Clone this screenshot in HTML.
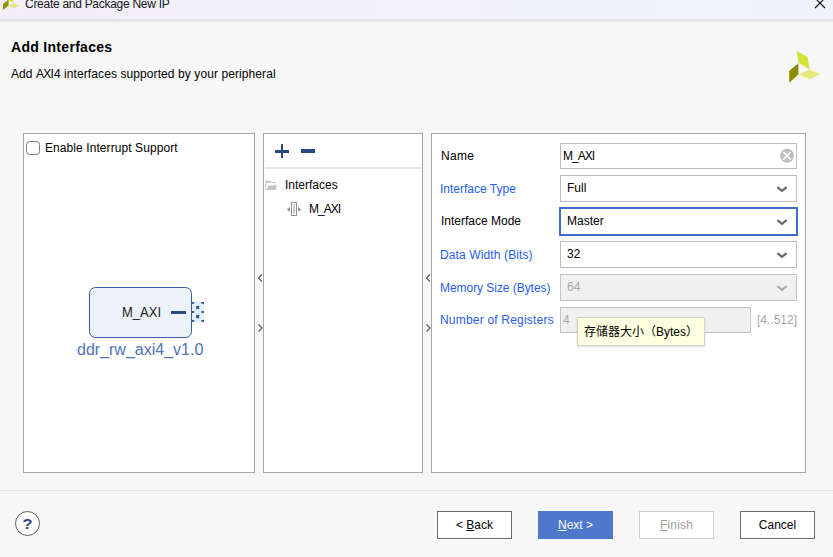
<!DOCTYPE html>
<html lang="en">
<head>
<meta charset="utf-8">
<title>Create and Package New IP</title>
<style>
html,body{margin:0;padding:0;}
body{width:833px;height:557px;overflow:hidden;position:relative;background:#f7f7f7;
  font-family:"Liberation Sans","Noto Sans CJK SC",sans-serif;font-size:12px;color:#000;}
.abs{position:absolute;}
.t{position:absolute;white-space:nowrap;line-height:14px;height:14px;}
#titlebar{left:0;top:0;width:833px;height:19px;background:linear-gradient(90deg,#f3eef8 0%,#f2f2f8 50%,#eff3f9 100%);}
#titleline{left:0;top:19px;width:833px;height:3px;background:#e4e4e4;}
.panel{position:absolute;background:#fff;border:1px solid #a6a6a6;box-sizing:border-box;}
.lbl{color:#000;}
.blue{color:#1f5eee;}
.field{position:absolute;box-sizing:border-box;background:#fff;border:1px solid #bdbdbd;}
.field.dis{background:#f0f0f0;border-color:#c4c4c4;}
.btn{position:absolute;box-sizing:border-box;top:511px;height:28px;width:75px;background:#fff;border:1px solid #6a6a6a;text-align:center;line-height:26px;font-size:12px;}
u{text-decoration:underline;text-underline-offset:1px;}
</style>
</head>
<body>

<!-- title bar -->
<div id="titlebar" class="abs"></div>
<div id="titleline" class="abs"></div>
<svg class="abs" style="left:0;top:0" width="24" height="14" viewBox="0 0 24 14">
  <polygon points="8,-4 13,-1.5 13.5,3 9,0.5" fill="#d4e034"/>
  <polygon points="3,4 8.6,-0.5 8.6,5.5 3,10" fill="#8f9400"/>
  <polygon points="9,5.6 14,3.2 19,5.6 14,8.6" fill="#e3ea7a"/>
</svg>
<div class="t" id="ttl" style="left:25px;top:-3px;font-size:12px;letter-spacing:-0.28px;color:#151515;">Create and Package New IP</div>
<svg class="abs" style="left:812px;top:0" width="16" height="10" viewBox="0 0 16 10">
  <path d="M3,-2 L13,8 M13,-2 L3,8" stroke="#111" stroke-width="1.1" fill="none"/>
</svg>

<!-- header -->
<div class="t" id="h1" style="left:11px;top:40px;font-size:14px;font-weight:bold;letter-spacing:0.3px;">Add Interfaces</div>
<div class="t" id="h2" style="left:11px;top:67px;letter-spacing:0.09px;">Add <span style="letter-spacing:-0.8px">AX</span>I4 interfaces supported by your peripheral</div>
<svg class="abs" style="left:785px;top:48px" width="40" height="38" viewBox="785 48 40 38">
  <polygon points="796.8,51.2 807.6,57.1 809.4,69.2 798.6,62.9" fill="#d4e034"/>
  <polygon points="789.2,71 798.4,63.2 798.4,74.6 789.2,82.7" fill="#8a8f00"/>
  <polygon points="799.1,74.6 809.4,69.6 820.6,74.1 809.8,79.5" fill="#e3ea7a"/>
</svg>

<!-- left panel -->
<div class="panel" style="left:23px;top:133px;width:232px;height:340px;"></div>
<div class="abs" style="left:26px;top:141px;width:14px;height:14px;box-sizing:border-box;border:1px solid #7d7d7d;border-radius:3.5px;background:#fff;"></div>
<div class="t" id="cb" style="left:45px;top:141px;letter-spacing:0.08px;">Enable Interrupt Support</div>

<!-- block diagram -->
<div class="abs" style="left:89px;top:287px;width:103px;height:51px;box-sizing:border-box;border:1px solid #3a5aa5;border-radius:6.5px;background:#eef2fa;"></div>
<div class="t" id="bm" style="left:121.5px;top:303px;font-size:15.5px;transform:scaleX(0.84);transform-origin:0 0;line-height:18px;height:18px;color:#262626;">M_AXI</div>
<div class="abs" style="left:171px;top:311px;width:15px;height:3px;background:#2b4a8c;"></div>
<svg class="abs" style="left:192px;top:301px" width="14" height="22" viewBox="0 0 14 22">
  <rect x="0" y="1" width="12" height="20" fill="#e3eefa"/>
  <g fill="#2b579a">
    <rect x="0" y="1" width="2.2" height="1.8"/><rect x="9.3" y="1" width="2.7" height="1.8"/>
    <rect x="0" y="10.1" width="2.2" height="1.8"/><rect x="9.3" y="10.1" width="2.7" height="1.8"/>
    <rect x="0" y="19" width="2.2" height="1.8"/><rect x="9.3" y="19" width="2.7" height="1.8"/>
    <rect x="4.2" y="4.9" width="3" height="3.2"/><rect x="4.2" y="14" width="3" height="3.2"/>
  </g>
</svg>
<div class="t" id="ddr" style="left:77px;top:341px;font-size:16px;line-height:18px;height:18px;color:#5373b6;">ddr_rw_axi4_v1.0</div>

<!-- splitter 1 -->
<svg class="abs" style="left:256px;top:270px" width="8" height="66" viewBox="0 0 8 66">
  <path d="M6,4.5 L2.5,8 L6,11.5" stroke="#5a5a5a" stroke-width="1.2" fill="none"/>
  <path d="M2.5,54.5 L6,58 L2.5,61.5" stroke="#5a5a5a" stroke-width="1.2" fill="none"/>
</svg>

<!-- middle panel -->
<div class="panel" style="left:263px;top:133px;width:160px;height:340px;"></div>
<div class="abs" style="left:275px;top:149.5px;width:14px;height:3px;background:#2a4880;"></div>
<div class="abs" style="left:280.5px;top:144px;width:2.8px;height:14px;background:#2a4880;"></div>
<div class="abs" style="left:301px;top:149px;width:14px;height:4px;background:#2a4880;"></div>
<div class="abs" style="left:265px;top:167px;width:157px;height:2px;background:#e6e6e6;"></div>
<svg class="abs" style="left:264px;top:178.5px" width="14" height="13" viewBox="0 0 14 13">
  <path d="M1.3,2.4 Q1.3,1.6 2.1,1.6 L5.8,1.6 Q6.5,1.6 6.6,2.4 L6.7,3.1 L10.6,3.1 Q11.4,3.1 11.4,3.9 L11.4,6.4 L10.4,6.4 L10.4,4.1 L2.3,4.1 L2.3,10.9 L1.3,10.9 Z" fill="#cdcdcd"/>
  <polygon points="4.1,6.6 13,6.6 11.9,11.1 2.7,11.1" fill="#c3c3c3"/>
</svg>
<div class="t" id="ifs" style="left:285px;top:178px;">Interfaces</div>
<svg class="abs" style="left:286px;top:201px" width="16" height="17" viewBox="0 0 16 17">
  <rect x="5.5" y="1.5" width="5" height="13" fill="#fff" stroke="#8f9195" stroke-width="1"/>
  <rect x="7.1" y="3.1" width="1.9" height="9.8" fill="#cdced0"/>
  <polygon points="0.8,8.45 3.9,5.8 3.9,11.1" fill="#95989b"/>
  <polygon points="12,5.8 12,11.1 15.1,8.45" fill="#95989b"/>
</svg>
<div class="t" id="max" style="left:309px;top:201.5px;letter-spacing:-1px;">M_AXI</div>

<!-- splitter 2 -->
<svg class="abs" style="left:424px;top:270px" width="8" height="66" viewBox="0 0 8 66">
  <path d="M6,4.5 L2.5,8 L6,11.5" stroke="#5a5a5a" stroke-width="1.2" fill="none"/>
  <path d="M2.5,54.5 L6,58 L2.5,61.5" stroke="#5a5a5a" stroke-width="1.2" fill="none"/>
</svg>

<!-- right panel -->
<div class="panel" style="left:431px;top:133px;width:375px;height:340px;"></div>

<div class="t lbl" id="l1" style="left:441px;top:149px;letter-spacing:0.3px;">Name</div>
<div class="field" style="left:560px;top:143px;width:237px;height:26px;"></div>
<div class="t" id="v1" style="left:563px;top:149px;letter-spacing:-1px;">M_AXI</div>
<svg class="abs" style="left:779px;top:148px" width="16" height="16" viewBox="0 0 16 16">
  <circle cx="8" cy="7.8" r="7" fill="#bebebe"/>
  <path d="M4.2,4 L11.8,11.6 M11.8,4 L4.2,11.6" stroke="#fff" stroke-width="1.6" fill="none"/>
</svg>

<div class="t blue" id="l2" style="left:440px;top:182px;">Interface Type</div>
<div class="field" style="left:560px;top:175px;width:237px;height:27px;"></div>
<div class="t" id="v2" style="left:567px;top:181px;">Full</div>
<svg class="abs" style="left:775px;top:183px" width="14" height="12" viewBox="0 0 14 12"><path d="M2.4,4.2 L7,7.8 L11.6,4.2" stroke="#646464" stroke-width="2.1" fill="none"/></svg>

<div class="t lbl" id="l3" style="left:441px;top:214px;">Interface Mode</div>
<div class="field" style="left:559px;top:207px;width:239px;height:29px;border:2px solid #3d6cc9;"></div>
<div class="t" id="v3" style="left:567px;top:214px;">Master</div>
<svg class="abs" style="left:775px;top:216px" width="14" height="12" viewBox="0 0 14 12"><path d="M2.4,4.2 L7,7.8 L11.6,4.2" stroke="#646464" stroke-width="2.1" fill="none"/></svg>

<div class="t blue" id="l4" style="left:440px;top:248px;letter-spacing:0.12px;">Data Width (Bits)</div>
<div class="field" style="left:560px;top:241px;width:237px;height:27px;"></div>
<div class="t" id="v4" style="left:567px;top:247px;">32</div>
<svg class="abs" style="left:775px;top:249px" width="14" height="12" viewBox="0 0 14 12"><path d="M2.4,4.2 L7,7.8 L11.6,4.2" stroke="#646464" stroke-width="2.1" fill="none"/></svg>

<div class="t blue" id="l5" style="left:440px;top:281px;letter-spacing:-0.05px;">Memory Size (Bytes)</div>
<div class="field dis" style="left:560px;top:274px;width:237px;height:27px;"></div>
<div class="t" id="v5" style="left:567px;top:280px;color:#a6a6a6;">64</div>
<svg class="abs" style="left:775px;top:282px" width="14" height="12" viewBox="0 0 14 12"><path d="M2.4,4.2 L7,7.8 L11.6,4.2" stroke="#aaaaaa" stroke-width="2.1" fill="none"/></svg>

<div class="t blue" id="l6" style="left:440px;top:313px;letter-spacing:0.2px;">Number of Registers</div>
<div class="field dis" style="left:560px;top:307px;width:191px;height:26px;"></div>
<div class="t" id="v6" style="left:563px;top:313px;color:#a6a6a6;">4</div>
<div class="t" id="rng" style="left:757px;top:312.5px;color:#a6a6a6;">[4..512]</div>

<!-- tooltip -->
<div class="abs" style="left:577px;top:317px;width:128px;height:29px;box-sizing:border-box;background:#ffffe1;border:1px solid #d4d4c8;box-shadow:0 1px 2px rgba(0,0,0,0.15);"></div>
<div class="t" id="tip" style="left:584px;top:323px;font-size:12px;line-height:18px;height:18px;">存储器大小（Bytes）</div>

<!-- footer -->
<div class="abs" style="left:0;top:490px;width:833px;height:1px;background:#e5e5e5;"></div>
<div class="abs" style="left:15px;top:511px;width:25px;height:25px;box-sizing:border-box;border:1px solid #5e5e5e;border-radius:50%;background:#fff;"></div>
<div class="t" id="q" style="left:15.3px;top:516px;width:25px;text-align:center;font-weight:bold;font-size:14px;line-height:16px;height:16px;color:#2a4585;transform:scaleX(1.17);">?</div>

<div class="btn" style="left:437px;">&lt; <u>B</u>ack</div>
<div class="btn" style="left:538px;background:#4d78cc;border-color:#4d78cc;color:#fff;"><u>N</u>ext &gt;</div>
<div class="btn" style="left:639px;border-color:#cdcdcd;color:#a0a0a0;letter-spacing:0.2px;"><u>F</u>inish</div>
<div class="btn" style="left:740px;">Cancel</div>

</body>
</html>
